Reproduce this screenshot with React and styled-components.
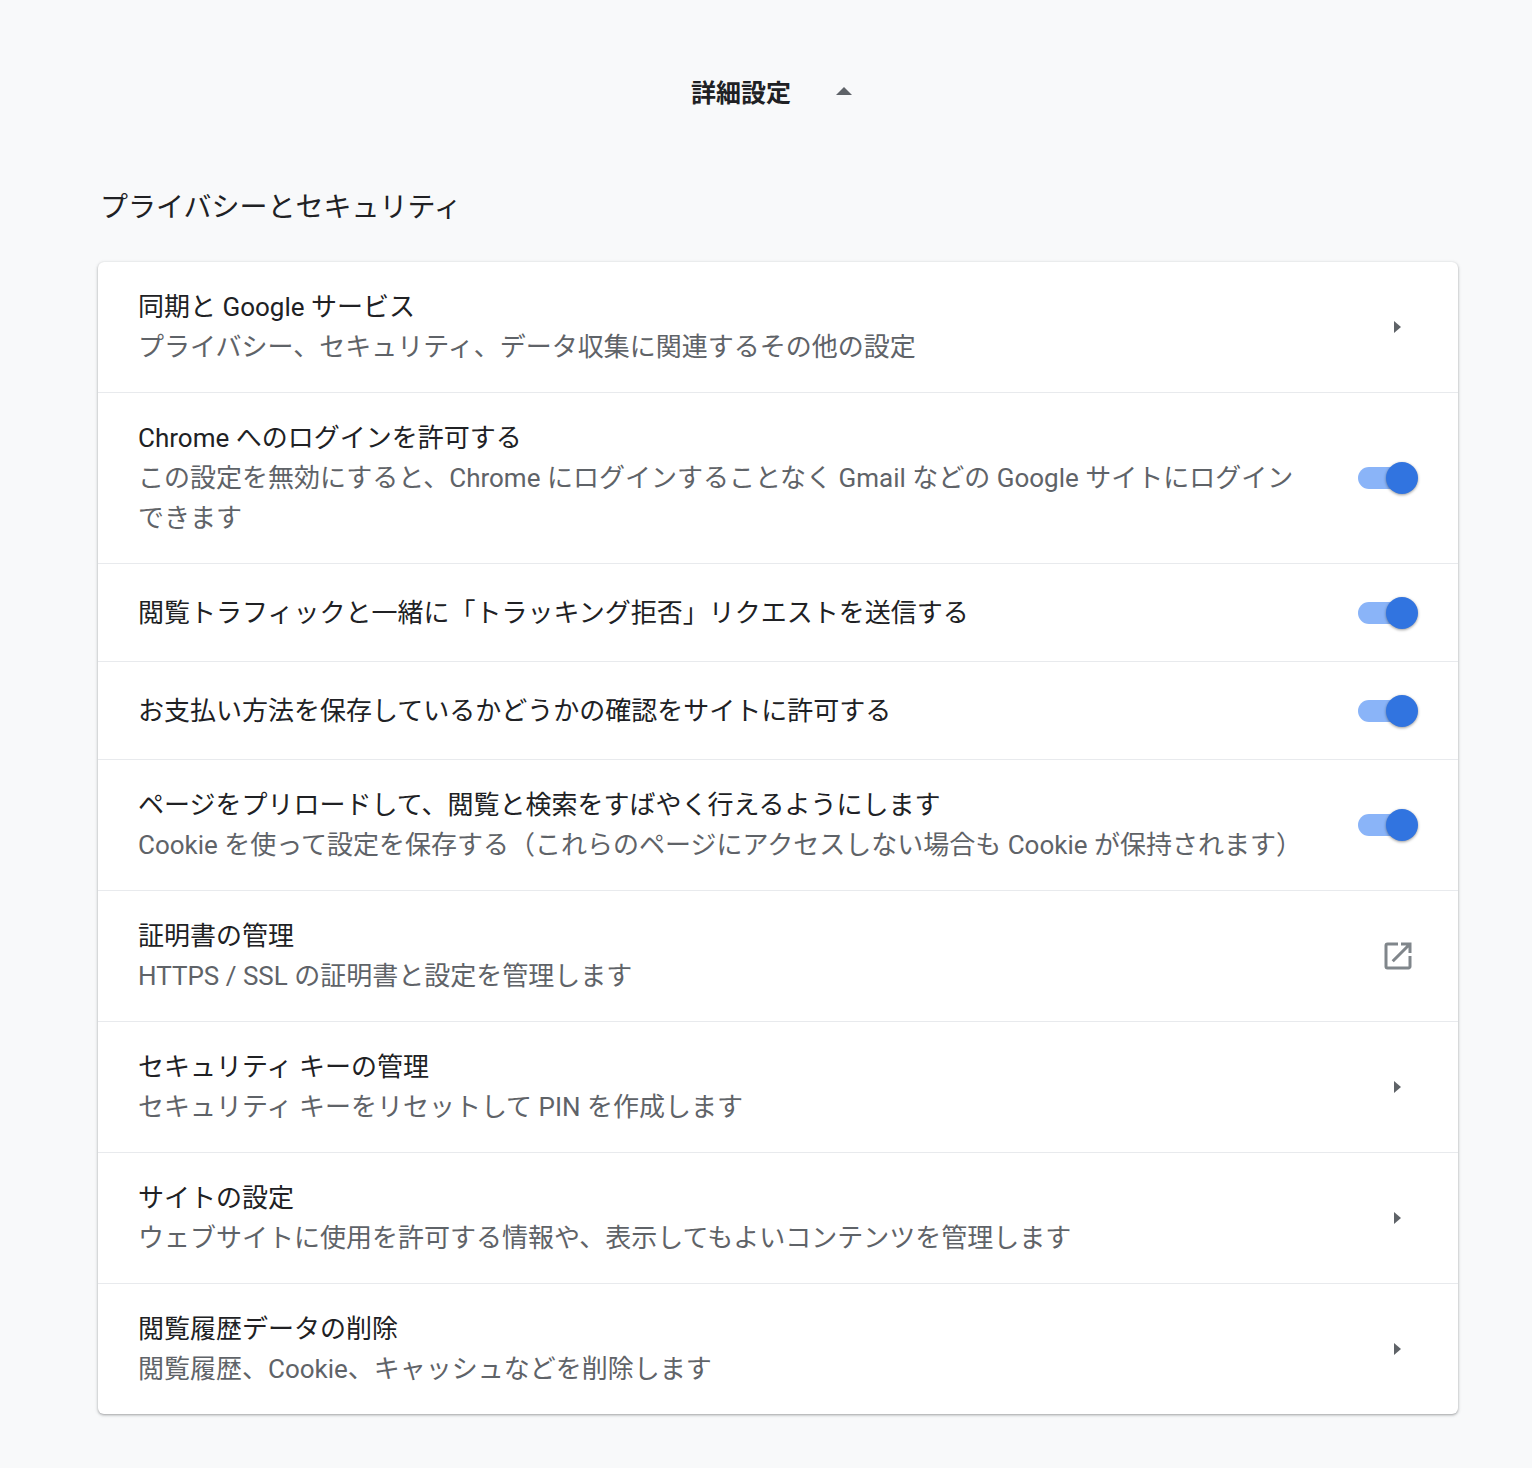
import React from 'react'
import styled, { createGlobalStyle } from 'styled-components'

const Global = createGlobalStyle`
  body {
    margin: 0;
    background: #f8f9fa;
    font-family: Roboto, "Noto Sans CJK JP", sans-serif;
    color: #202124;
  }
`

const rows = [
  { title: '同期と Google サービス', sub: 'プライバシー、セキュリティ、データ収集に関連するその他の設定', action: 'arrow' },
  { title: 'Chrome へのログインを許可する', sub: 'この設定を無効にすると、Chrome にログインすることなく Gmail などの Google サイトにログインできます', action: 'toggle' },
  { title: '閲覧トラフィックと一緒に「トラッキング拒否」リクエストを送信する', action: 'toggle' },
  { title: 'お支払い方法を保存しているかどうかの確認をサイトに許可する', action: 'toggle' },
  { title: 'ページをプリロードして、閲覧と検索をすばやく行えるようにします', sub: 'Cookie を使って設定を保存する（これらのページにアクセスしない場合も Cookie が保持されます）', action: 'toggle' },
  { title: '証明書の管理', sub: 'HTTPS / SSL の証明書と設定を管理します', action: 'external' },
  { title: 'セキュリティ キーの管理', sub: 'セキュリティ キーをリセットして PIN を作成します', action: 'arrow' },
  { title: 'サイトの設定', sub: 'ウェブサイトに使用を許可する情報や、表示してもよいコンテンツを管理します', action: 'arrow' },
  { title: '閲覧履歴データの削除', sub: '閲覧履歴、Cookie、キャッシュなどを削除します', action: 'arrow' },
]

const Action = ({ type }) => {
  if (type === 'toggle') return <Toggle><Knob /></Toggle>
  if (type === 'external') {
    return (
      <IconBox>
        <svg width="36" height="36" viewBox="0 0 24 24" fill="#80868b">
          <path d="M19 19H5V5h7V3H5a2 2 0 0 0-2 2v14a2 2 0 0 0 2 2h14c1.1 0 2-.9 2-2v-7h-2v7zM14 3v2h3.59l-9.83 9.83 1.41 1.41L19 6.41V10h2V3h-7z" />
        </svg>
      </IconBox>
    )
  }
  return (
    <IconBox>
      <svg width="12" height="18" viewBox="0 0 12 18"><path d="M2 3l7 6-7 6z" fill="#5f6368" /></svg>
    </IconBox>
  )
}

export default function App() {
  return (
    <Page>
      <Global />
      <Header>
        <HeaderText>詳細設定</HeaderText>
        <svg width="18" height="10" viewBox="0 0 18 10"><path d="M1 9l8-8 8 8z" fill="#5f6368" /></svg>
      </Header>
      <SectionTitle>プライバシーとセキュリティ</SectionTitle>
      <Card>
        {rows.map((r, i) => (
          <Row key={i}>
            <Texts>
              <Title>{r.title}</Title>
              {r.sub && <Sub>{r.sub}</Sub>}
            </Texts>
            <Action type={r.action} />
          </Row>
        ))}
      </Card>
    </Page>
  )
}

const Page = styled.div`
  padding: 68px 74px 60px 98px;
`

const Header = styled.div`
  display: flex;
  align-items: center;
  justify-content: center;
  gap: 44px;
  margin-right: 12px;
  height: 46px;
`

const HeaderText = styled.h1`
  margin: 0;
  font-size: 25px;
  font-weight: 700;
  color: #202124;
`

const SectionTitle = styled.h2`
  margin: 74px 0 34px 2px;
  font-size: 28px;
  font-weight: 400;
  line-height: 40px;
  color: #202124;
`

const Card = styled.div`
  background: #fff;
  border-radius: 6px;
  box-shadow: 0 1px 2px rgba(60, 64, 67, 0.3), 0 1px 3px 1px rgba(60, 64, 67, 0.15);
`

const Row = styled.div`
  display: flex;
  align-items: center;
  min-height: 98px;
  padding: 25px 40px;
  box-sizing: border-box;
  & + & {
    border-top: 1px solid #e8eaed;
  }
`

const Texts = styled.div`
  flex: 1;
  padding-right: 56px;
`

const Title = styled.div`
  font-size: 26px;
  line-height: 40px;
  color: #202124;
`

const Sub = styled.div`
  font-size: 26px;
  line-height: 40px;
  color: #5f6368;
`

const IconBox = styled.div`
  width: 40px;
  display: flex;
  justify-content: center;
`

const Toggle = styled.div`
  position: relative;
  width: 58px;
  height: 22px;
  border-radius: 11px;
  background: #8ab4f8;
  margin-right: 2px;
`

const Knob = styled.div`
  position: absolute;
  right: -2px;
  top: -5px;
  width: 32px;
  height: 32px;
  border-radius: 50%;
  background: #3174e0;
  box-shadow: 0 1px 3px rgba(0, 0, 0, 0.4);
`
